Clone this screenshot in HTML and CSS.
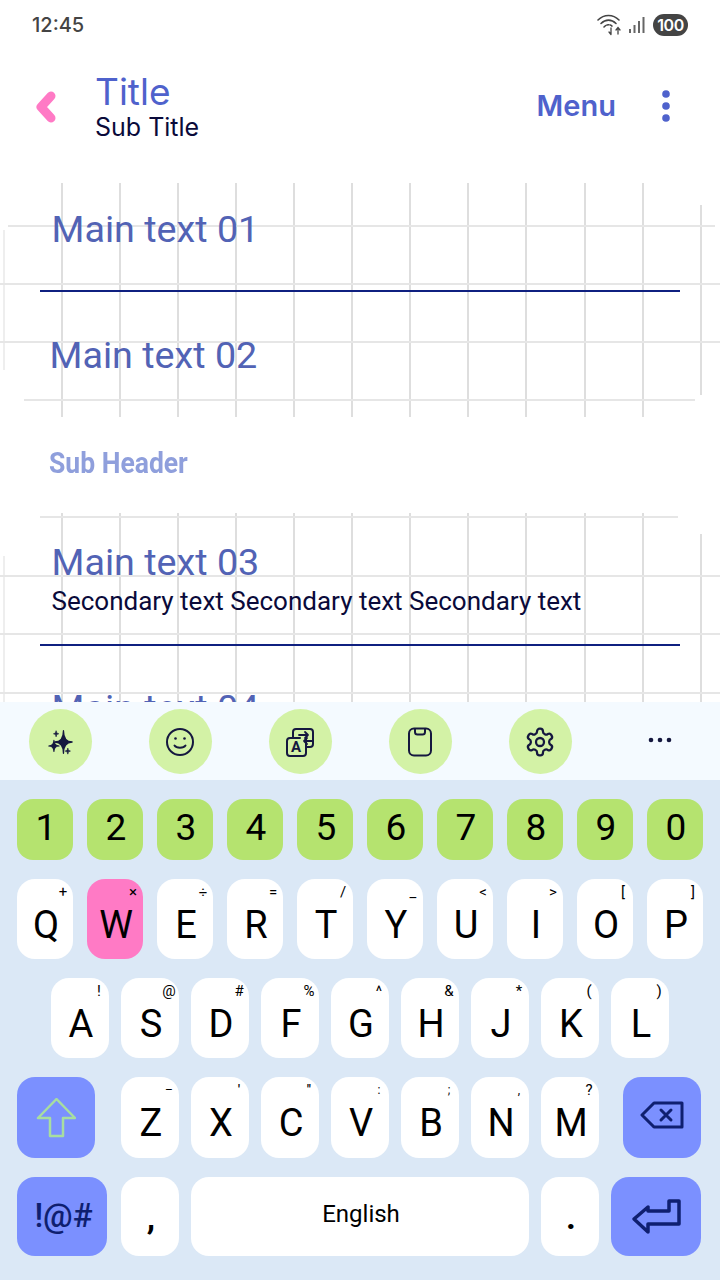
FILE: index.html
```html
<!DOCTYPE html>
<html lang="en">
<head>
    <meta charset="UTF-8">
    <meta name="viewport" content="width=device-width, initial-scale=1.0">
    <title>Keyboard</title>
    <link rel="stylesheet" href="styles.css">
</head>
<body>
    <div class="status-bar">
        <span class="time">12:45</span>
        <div class="status-icons">
            <svg class="wifi" width="26" height="22" viewBox="0 0 26 22" fill="none" stroke="#444" stroke-width="1.6" stroke-linecap="round">
                <path d="M1 6C7 0 16 0 22 6"/>
                <path d="M4 9.5C8.5 5 14.5 5 19 9.5"/>
                <path d="M7 13C10 10 13 10 16 13" stroke-dasharray="2 1.5"/>
                <path d="M14 14v6M12 18l2 2.5M21 20v-6M19 16l2-2.500 2 2.500" stroke-width="1.300"/>
            </svg>
            <svg class="bars" width="16" height="18" viewBox="0 0 16 18" fill="#666">
                <rect x="0" y="13" width="2" height="4"/>
                <rect x="4.500" y="9" width="2" height="8"/>
                <rect x="9" y="5" width="2" height="12"/>
                <rect x="13.500" y="1" width="2" height="16"/>
            </svg>
            <span class="battery">100</span>
        </div>
    </div>

    <div class="page">
        <div class="app-bar">
            <svg class="back" width="28" height="40" viewBox="0 0 28 40" fill="none" stroke="#ff7ac5" stroke-width="9" stroke-linecap="round" stroke-linejoin="round">
                <path d="M17 9L7 20L17 31"/>
            </svg>
            <div class="titles">
                <div class="title">Title</div>
                <div class="sub-title">Sub Title</div>
            </div>
            <div class="menu">Menu</div>
            <svg class="more" width="8" height="34" viewBox="0 0 8 34" fill="#4f62cc">
                <circle cx="4" cy="5" r="3.800"/>
                <circle cx="4" cy="17" r="3.800"/>
                <circle cx="4" cy="29" r="3.800"/>
            </svg>
        </div>

        <div class="group group-one">
            <svg class="grid" width="720" height="234" viewBox="0 183 720 234">
                <g class="grid-v">
                    <path d="M62 183V417M120 183V417M178 183V417M236 183V417M294 183V417M352 183V417M410 183V417M468 183V417M526 183V417M585 183V417M643 183V417M701 205V395"/>
                    <path class="grid-edge" d="M4 230V370"/>
                </g>
                <g class="grid-h">
                    <path d="M8 226H715M0 284H720M0 342H720M24 400H695"/>
                </g>
            </svg>
            <div class="row row-first">
                <div class="main-text">Main text 01</div>
            </div>
            <div class="row row-second">
                <div class="main-text">Main text 02</div>
            </div>
        </div>

        <div class="sub-header"><span class="sub-header-text">Sub Header</span></div>

        <div class="group group-two">
            <svg class="grid" width="720" height="190" viewBox="0 512 720 190">
                <g class="grid-v">
                    <path d="M62 512V702M120 512V702M178 512V702M236 512V702M294 512V702M352 512V702M410 512V702M468 512V702M526 512V702M585 512V702M643 512V702M701 533V702"/>
                    <path class="grid-edge" d="M4 555V702"/>
                </g>
                <g class="grid-h">
                    <path d="M40 516H678M0 575H720M0 633H720M0 692H720"/>
                </g>
            </svg>
            <div class="row row-third">
                <div class="main-text">Main text 03</div>
                <div class="secondary-text">Secondary text Secondary text Secondary text</div>
            </div>
            <div class="row row-fourth">
                <div class="main-text">Main text 04</div>
            </div>
        </div>
    </div>

    <div class="keyboard">
        <div class="toolbar">
            <div class="tool">
                <svg width="26" height="28" viewBox="0 0 30 30" fill="#15183f">
                    <path d="M19 2Q19 15 29 15Q19 15 19 28Q19 15 9 15Q19 15 19 2Z" stroke="#15183f" stroke-width="1.500" stroke-linejoin="round"/>
                    <path d="M8 13Q8 19.500 14 19.500Q8 19.500 8 26Q8 19.500 2 19.500Q8 19.500 8 13Z" stroke="#15183f" stroke-width="1.200" stroke-linejoin="round"/>
                    <path d="M10.500 2Q10.500 5.500 13.500 5.500Q10.500 5.500 10.500 9Q10.500 5.500 7.500 5.500Q10.500 5.500 10.500 2Z" stroke="#15183f" stroke-width=".8"/>
                    <path d="M24 22Q24 25.500 27 25.500Q24 25.500 24 29Q24 25.500 21 25.500Q24 25.500 24 22Z" stroke="#15183f" stroke-width=".8"/>
                </svg>
            </div>
            <div class="tool">
                <svg width="30" height="30" viewBox="0 0 30 30" fill="none" stroke="#15183f" stroke-width="2" stroke-linecap="round">
                    <circle cx="15" cy="15" r="13"/>
                    <path d="M9.500 18.500C11.500 21.500 18.500 21.500 20.500 18.500"/>
                    <circle cx="10.500" cy="11.500" r="1.300" fill="#15183f" stroke="none"/>
                    <circle cx="19.500" cy="11.500" r="1.300" fill="#15183f" stroke="none"/>
                </svg>
            </div>
            <div class="tool">
                <svg width="30" height="30" viewBox="0 0 30 30" fill="none" stroke="#15183f" stroke-width="2" stroke-linecap="round" stroke-linejoin="round">
                    <path d="M8 11V5a3 3 0 0 1 3-3H25a3 3 0 0 1 3 3V17a3 3 0 0 1-3 3H21"/>
                    <path d="M5 11H15M21 11V26a3 3 0 0 1-3 3H5a3 3 0 0 1-3-3V14a3 3 0 0 1 3-3"/>
                    <path d="M14 8H23M20 5l3 3-3 3M27 14H19M22 11l-3 3 3 3" stroke-width="1.800"/>
                    <text class="tool-letter" x="6" y="25">A</text>
                </svg>
            </div>
            <div class="tool">
                <svg width="30" height="30" viewBox="0 0 30 30" fill="none" stroke="#15183f" stroke-width="2" stroke-linejoin="round">
                    <rect x="4" y="1.500" width="22" height="27" rx="5"/>
                    <path d="M10 1.500V5a2.500 2.500 0 0 0 2.500 2.500H17.500A2.500 2.500 0 0 0 20 5V1.500"/>
                </svg>
            </div>
            <div class="tool">
                <svg width="32" height="32" viewBox="0 0 24 24" fill="none" stroke="#15183f" stroke-width="1.700" stroke-linejoin="round">
                    <path d="M12.220 2h-.44a2 2 0 0 0-2 2v.18a2 2 0 0 1-1 1.730l-.43.25a2 2 0 0 1-2 0l-.15-.08a2 2 0 0 0-2.730.73l-.22.38a2 2 0 0 0 .73 2.730l.15.1a2 2 0 0 1 1 1.720v.51a2 2 0 0 1-1 1.740l-.15.09a2 2 0 0 0-.73 2.730l.22.38a2 2 0 0 0 2.730.73l.15-.08a2 2 0 0 1 2 0l.43.25a2 2 0 0 1 1 1.730V20a2 2 0 0 0 2 2h.44a2 2 0 0 0 2-2v-.18a2 2 0 0 1 1-1.730l.43-.25a2 2 0 0 1 2 0l.15.08a2 2 0 0 0 2.730-.73l.22-.39a2 2 0 0 0-.73-2.730l-.15-.08a2 2 0 0 1-1-1.740v-.5a2 2 0 0 1 1-1.740l.15-.09a2 2 0 0 0 .73-2.730l-.22-.38a2 2 0 0 0-2.730-.73l-.15.08a2 2 0 0 1-2 0l-.43-.25a2 2 0 0 1-1-1.730V4a2 2 0 0 0-2-2z"/>
                    <circle cx="12" cy="12" r="3"/>
                </svg>
            </div>
            <div class="tool tool-plain">
                <svg width="24" height="6" viewBox="0 0 24 6" fill="#15183f">
                    <circle cx="3" cy="3" r="2.300"/>
                    <circle cx="12" cy="3" r="2.300"/>
                    <circle cx="21" cy="3" r="2.300"/>
                </svg>
            </div>
        </div>

        <div class="keys">
            <div class="key-row row-digits">
                <div class="key digit">1</div>
                <div class="key digit">2</div>
                <div class="key digit">3</div>
                <div class="key digit">4</div>
                <div class="key digit">5</div>
                <div class="key digit">6</div>
                <div class="key digit">7</div>
                <div class="key digit">8</div>
                <div class="key digit">9</div>
                <div class="key digit">0</div>
            </div>
            <div class="key-row row-top">
                <div class="key"><span class="hint">+</span>Q</div>
                <div class="key key-pressed"><span class="hint">×</span>W</div>
                <div class="key"><span class="hint">÷</span>E</div>
                <div class="key"><span class="hint">=</span>R</div>
                <div class="key"><span class="hint">/</span>T</div>
                <div class="key"><span class="hint">_</span>Y</div>
                <div class="key"><span class="hint">&lt;</span>U</div>
                <div class="key"><span class="hint">&gt;</span>I</div>
                <div class="key"><span class="hint">[</span>O</div>
                <div class="key"><span class="hint">]</span>P</div>
            </div>
            <div class="key-row row-home">
                <div class="key"><span class="hint">!</span>A</div>
                <div class="key"><span class="hint">@</span>S</div>
                <div class="key"><span class="hint">#</span>D</div>
                <div class="key"><span class="hint">%</span>F</div>
                <div class="key"><span class="hint">^</span>G</div>
                <div class="key"><span class="hint">&amp;</span>H</div>
                <div class="key"><span class="hint">*</span>J</div>
                <div class="key"><span class="hint">(</span>K</div>
                <div class="key"><span class="hint">)</span>L</div>
            </div>
            <div class="key-row row-bottom">
                <div class="key key-action key-shift">
                    <svg width="40" height="40" viewBox="0 0 40 40" fill="none" stroke="#a8dea0" stroke-width="2.500" stroke-linejoin="round">
                        <path d="M20.500 1L2 20H14V38H27V20H39Z"/>
                    </svg>
                </div>
                <div class="key"><span class="hint hint-small">–</span>Z</div>
                <div class="key"><span class="hint hint-small hint-tick">'</span>X</div>
                <div class="key"><span class="hint hint-small hint-tick">"</span>C</div>
                <div class="key"><span class="hint hint-small">:</span>V</div>
                <div class="key"><span class="hint hint-small">;</span>B</div>
                <div class="key"><span class="hint hint-small">,</span>N</div>
                <div class="key"><span class="hint">?</span>M</div>
                <div class="key key-action key-delete">
                    <svg class="delete-icon" width="44" height="28" viewBox="0 0 44 28" fill="none" stroke="#0f1f70" stroke-width="3" stroke-linejoin="round" stroke-linecap="round">
                        <path d="M14 2H42V26H14L2 14Z"/>
                        <path d="M21 9L31 19M31 9L21 19"/>
                    </svg>
                </div>
            </div>
            <div class="key-row row-space">
                <div class="key key-action key-symbols">!@#</div>
                <div class="key key-punct">,</div>
                <div class="key key-spacebar">English</div>
                <div class="key key-punct">.</div>
                <div class="key key-action key-enter">
                    <svg width="50" height="36" viewBox="0 0 50 36" fill="none" stroke="#0f1f70" stroke-width="3.500" stroke-linejoin="round">
                        <path d="M3 20L17 8V12H38V2H48V25H17V33Z"/>
                    </svg>
                </div>
            </div>
        </div>
    </div>
</body>
</html>
```

FILE: styles.css
```css
* {
    box-sizing: border-box;
}

body {
    margin: 0;
    width: 720px;
    height: 1280px;
    overflow: hidden;
    display: flex;
    flex-direction: column;
    background-color: #ffffff;
    font-family: Roboto, sans-serif;
}

.status-bar {
    flex: none;
    height: 50px;
    padding: 0 32px;
    display: flex;
    justify-content: space-between;
    align-items: center;
}

.time {
    font-family: Inter, sans-serif;
    font-size: 20px;
    font-weight: 500;
    color: #444444;
}

.status-icons {
    display: flex;
    align-items: center;
}

.wifi {
    margin-right: 6px;
}

.bars {
    margin-right: 8px;
}

.battery {
    width: 35px;
    height: 22px;
    border-radius: 11px;
    background-color: #444444;
    color: #ffffff;
    font-family: Inter, sans-serif;
    font-size: 16px;
    font-weight: 600;
    letter-spacing: -0.5px;
    line-height: 22px;
    text-align: center;
}

.page {
    flex: 1;
    overflow: hidden;
}

.app-bar {
    height: 133px;
    padding: 0 0 22px 34px;
    display: flex;
    align-items: center;
}

.back {
    flex: none;
    margin-right: 33px;
    margin-top: 2px;
}

.titles {
    flex: 1;
    margin-top: 2px;
}

.title {
    font-family: Inter, sans-serif;
    font-size: 37px;
    line-height: 40px;
    color: #4f62cc;
}

.sub-title {
    font-family: Inter, sans-serif;
    font-size: 25px;
    line-height: 30px;
    color: #0a0a3a;
}

.menu {
    font-family: Inter, sans-serif;
    font-size: 29px;
    font-weight: 600;
    color: #4f62cc;
    margin-right: 46px;
}

.more {
    margin-right: 50px;
}

.group {
    position: relative;
}

.group-one {
    height: 234px;
}

.group-two {
    height: 190px;
}

.grid {
    position: absolute;
    top: 0;
    left: 0;
    filter: blur(0.5px);
}

.grid-v path {
    fill: none;
    stroke: #dedede;
    stroke-width: 2;
}

.grid-v .grid-edge {
    stroke: #eeeeee;
}

.grid-h path {
    fill: none;
    stroke: #e6e6e6;
    stroke-width: 2;
}

.row {
    position: relative;
    margin: 0 40px;
    padding-left: 11.500px;
}

.row-first {
    height: 109px;
    padding-top: 25px;
    border-bottom: 2px solid #0f2080;
}

.row-second {
    padding-top: 42px;
    padding-left: 9.500px;
}

.row-third {
    height: 133px;
    padding-top: 28px;
    border-bottom: 2px solid #0f2080;
}

.row-fourth {
    padding-top: 41px;
}

.main-text {
    font-size: 37.700px;
    line-height: 42px;
    color: #5263b5;
}

.secondary-text {
    font-size: 26px;
    line-height: 32px;
    color: #0a0a3a;
    margin-top: 2px;
}

.sub-header {
    height: 96px;
    padding: 28px 0 0 49px;
}

.sub-header-text {
    display: inline-block;
    font-size: 29px;
    font-weight: 700;
    line-height: 36px;
    color: #8f9fdc;
    transform: scaleX(0.914);
    transform-origin: left;
}

.keyboard {
    flex: none;
    height: 578px;
    background-color: #dbe8f6;
}

.toolbar {
    height: 78px;
    padding-left: 29px;
    display: flex;
    align-items: center;
    gap: 57px;
    background-color: #f4faff;
}

.tool {
    width: 63px;
    height: 65px;
    margin-top: 1px;
    border-radius: 50%;
    background-color: #d3f2a6;
    display: flex;
    justify-content: center;
    align-items: center;
}

.tool svg {
    margin-left: -1px;
}

.tool-plain {
    background: none;
    margin-top: -3px;
}

.tool-letter {
    font-family: Roboto, sans-serif;
    font-size: 15px;
    font-weight: 700;
    fill: #15183f;
    stroke: none;
}

.keys {
    padding-top: 19px;
    display: flex;
    flex-direction: column;
    gap: 19px;
}

.key-row {
    display: flex;
    height: 80px;
    padding-left: 17px;
    gap: 12px;
}

.row-digits {
    height: 61px;
    gap: 14px;
}

.row-top {
    gap: 14px;
}

.row-home {
    padding-left: 51px;
}

.row-bottom {
    height: 81px;
}

.row-space {
    height: 79px;
}

.key {
    position: relative;
    width: 58px;
    padding: 12px 0 0 2px;
    border-radius: 18px;
    background-color: #ffffff;
    display: flex;
    justify-content: center;
    align-items: center;
    font-size: 38px;
    color: #000000;
}

.row-top .key {
    width: 56px;
}

.row-bottom .key {
    padding-top: 10px;
}

.digit {
    width: 56px;
    padding: 0 0 5px 2px;
    border-radius: 16px;
    background-color: #b5e36f;
    font-size: 37px;
}

.key-pressed {
    background-color: #ff7ac5;
}

.hint {
    position: absolute;
    top: 4px;
    right: 2px;
    width: 16px;
    font-size: 15px;
    line-height: 18px;
    text-align: center;
}

.hint-small {
    font-size: 12px;
}

.hint-tick {
    font-weight: 700;
}

.row-bottom .key-action,
.key-action {
    padding: 0;
    background-color: #7b90ff;
}

.key-shift {
    width: 78px;
    margin-right: 14px;
}

.key-delete {
    width: 78px;
    margin-left: 12px;
}

.delete-icon {
    margin-top: -5px;
}

.key-symbols {
    width: 90px;
    margin-right: 2px;
    padding: 0 0 3px 3px;
    color: #0f1f70;
    font-size: 33px;
    font-weight: 500;
}

.key-enter {
    width: 90px;
}

.key-punct {
    padding-top: 0;
    font-weight: 700;
    font-size: 34px;
}

.key-spacebar {
    width: 338px;
    padding: 0 0 5px 2px;
    font-size: 24px;
}
```
